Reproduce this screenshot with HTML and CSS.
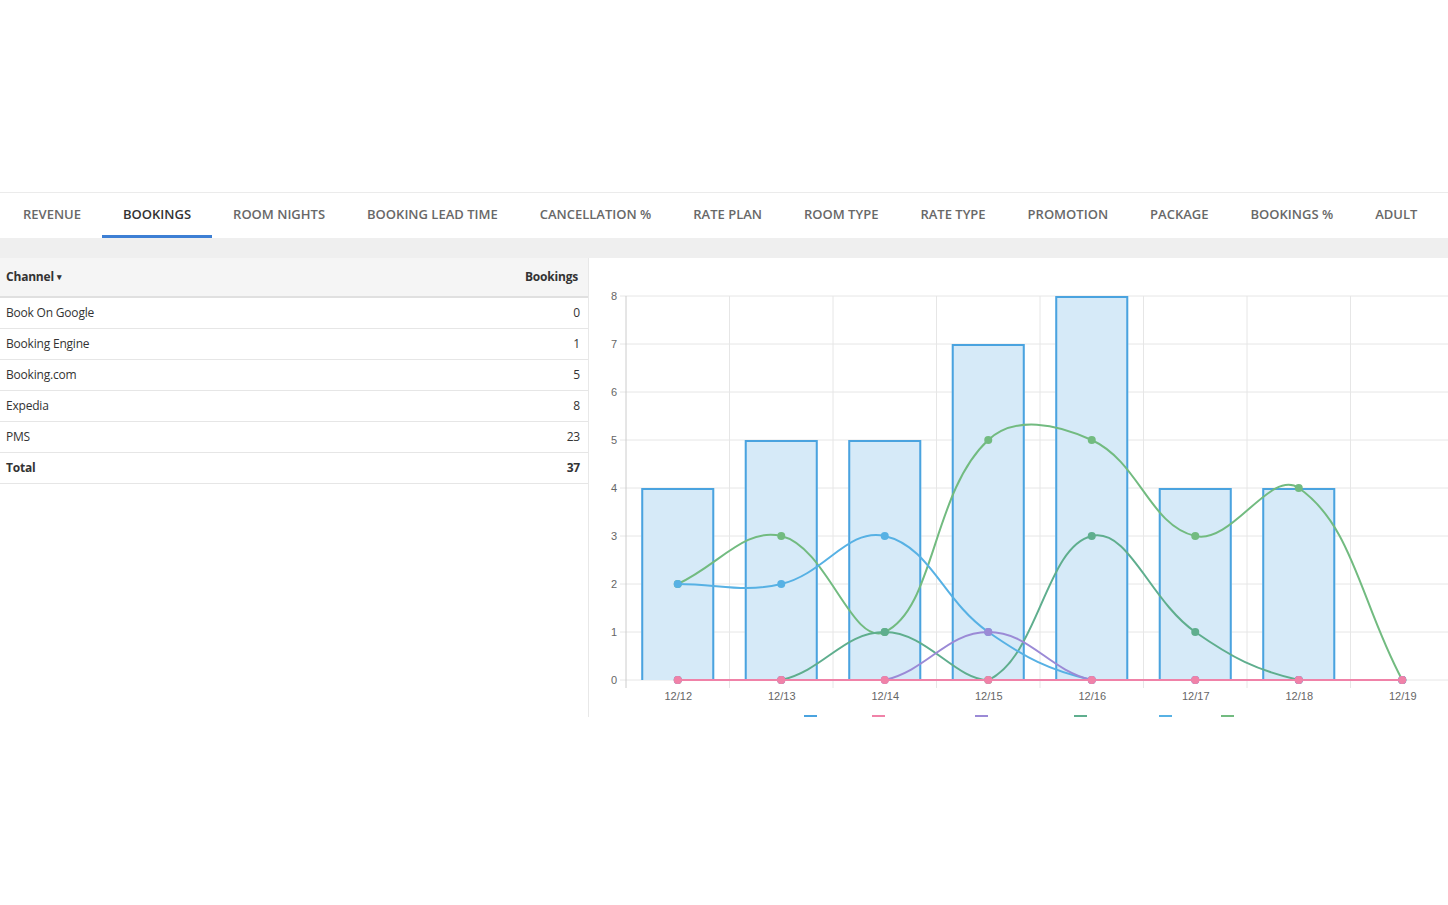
FILE: index.html
```html
<!DOCTYPE html>
<html lang="en">
<head>
<meta charset="utf-8">
<title>Bookings</title>
<link rel="stylesheet" href="styles.css">
</head>
<body>
<div class="top-space"></div>
<nav class="tabs">
  <a class="tab">REVENUE</a>
  <a class="tab active">BOOKINGS</a>
  <a class="tab">ROOM NIGHTS</a>
  <a class="tab">BOOKING LEAD TIME</a>
  <a class="tab">CANCELLATION %</a>
  <a class="tab">RATE PLAN</a>
  <a class="tab">ROOM TYPE</a>
  <a class="tab">RATE TYPE</a>
  <a class="tab">PROMOTION</a>
  <a class="tab">PACKAGE</a>
  <a class="tab">BOOKINGS %</a>
  <a class="tab">ADULT</a>
</nav>
<div class="band"></div>
<div class="content">
  <div class="table-panel">
    <table class="data">
      <thead>
        <tr><th class="left">Channel <span class="caret">&#9662;</span></th><th class="right">Bookings</th></tr>
      </thead>
      <tbody>
        <tr><td>Book On Google</td><td class="right">0</td></tr>
        <tr><td>Booking Engine</td><td class="right">1</td></tr>
        <tr><td>Booking.com</td><td class="right">5</td></tr>
        <tr><td>Expedia</td><td class="right">8</td></tr>
        <tr><td>PMS</td><td class="right">23</td></tr>
        <tr class="total"><td>Total</td><td class="right">37</td></tr>
      </tbody>
    </table>
  </div>
  <div class="chart-panel">
    <svg class="chart" width="859" height="459" viewBox="589 258 859 459" xmlns="http://www.w3.org/2000/svg">
      <g class="grid">
        <line x1="620" y1="296" x2="1454" y2="296"/>
        <line x1="620" y1="344" x2="1454" y2="344"/>
        <line x1="620" y1="392" x2="1454" y2="392"/>
        <line x1="620" y1="440" x2="1454" y2="440"/>
        <line x1="620" y1="488" x2="1454" y2="488"/>
        <line x1="620" y1="536" x2="1454" y2="536"/>
        <line x1="620" y1="584" x2="1454" y2="584"/>
        <line x1="620" y1="632" x2="1454" y2="632"/>
        <line x1="620" y1="680" x2="1454" y2="680"/>
        <line x1="729.5" y1="296" x2="729.5" y2="688"/>
        <line x1="833" y1="296" x2="833" y2="688"/>
        <line x1="936.5" y1="296" x2="936.5" y2="688"/>
        <line x1="1040" y1="296" x2="1040" y2="688"/>
        <line x1="1143.5" y1="296" x2="1143.5" y2="688"/>
        <line x1="1247" y1="296" x2="1247" y2="688"/>
        <line x1="1350.5" y1="296" x2="1350.5" y2="688"/>
      </g>
      <line class="axis" x1="626" y1="296" x2="626" y2="688"/>
      <g class="ylabels">
        <text x="617" y="300">8</text>
        <text x="617" y="348">7</text>
        <text x="617" y="396">6</text>
        <text x="617" y="444">5</text>
        <text x="617" y="492">4</text>
        <text x="617" y="540">3</text>
        <text x="617" y="588">2</text>
        <text x="617" y="636">1</text>
        <text x="617" y="684">0</text>
      </g>
      <g class="xlabels">
        <text x="678.25" y="700">12/12</text>
        <text x="781.75" y="700">12/13</text>
        <text x="885.25" y="700">12/14</text>
        <text x="988.75" y="700">12/15</text>
        <text x="1092.25" y="700">12/16</text>
        <text x="1195.75" y="700">12/17</text>
        <text x="1299.25" y="700">12/18</text>
        <text x="1402.75" y="700">12/19</text>
      </g>
      <g class="bars">
        <rect x="641.25" y="488" width="73" height="192"/>
        <rect x="744.75" y="440" width="73" height="240"/>
        <rect x="848.25" y="440" width="73" height="240"/>
        <rect x="951.75" y="344" width="73" height="336"/>
        <rect x="1055.25" y="296" width="73" height="384"/>
        <rect x="1158.75" y="488" width="73" height="192"/>
        <rect x="1262.25" y="488" width="73" height="192"/>
      </g>
      <g class="bar-borders">
        <path d="M642.25 680 V489 H713.25 V680"/>
        <path d="M745.75 680 V441 H816.75 V680"/>
        <path d="M849.25 680 V441 H920.25 V680"/>
        <path d="M952.75 680 V345 H1023.75 V680"/>
        <path d="M1056.25 680 V297 H1127.25 V680"/>
        <path d="M1159.75 680 V489 H1230.75 V680"/>
        <path d="M1263.25 680 V489 H1334.25 V680"/>
      </g>
      <g id="series"></g>
      <g class="legend">
        <rect x="805" y="716" width="11" height="10" fill="#d6eaf8" stroke="#4aa3df" stroke-width="2"/>
        <rect x="873" y="716" width="11" height="10" fill="#fbe0ea" stroke="#f082a8" stroke-width="2"/>
        <rect x="976" y="716" width="11" height="10" fill="#e8e3f6" stroke="#9b8ad6" stroke-width="2"/>
        <rect x="1075" y="716" width="11" height="10" fill="#dcefe7" stroke="#5fae8e" stroke-width="2"/>
        <rect x="1160" y="716" width="11" height="10" fill="#dcf0fa" stroke="#57b1e4" stroke-width="2"/>
        <rect x="1222" y="716" width="11" height="10" fill="#e0f1e2" stroke="#72bb80" stroke-width="2"/>
      </g>
    </svg>
  </div>
</div>
<div class="bottom-space"></div>
<script src="app.js"></script>
</body>
</html>
```

FILE: styles.css
```css
html, body {
  margin: 0;
  padding: 0;
  background: #ffffff;
  font-family: "Open Sans", "Liberation Sans", Arial, sans-serif;
  color: #333333;
}

.top-space {
  height: 192px;
  border-bottom: 1px solid #ebebeb;
}

.tabs {
  display: flex;
  height: 45px;
  padding-left: 2px;
  background: #ffffff;
}

.tab {
  display: flex;
  align-items: center;
  padding: 0 21px;
  font-size: 13px;
  font-weight: 600;
  color: #686868;
  white-space: nowrap;
  box-sizing: border-box;
  border-bottom: 3px solid transparent;
}

.tab.active {
  color: #333333;
  border-bottom-color: #3d7fd4;
}

.band {
  height: 20px;
  background: #efefef;
}

.content {
  display: flex;
  align-items: stretch;
}

.table-panel {
  width: 588px;
  border-right: 1px solid #e8e8e8;
  flex: none;
}

.data {
  width: 100%;
  border-collapse: collapse;
  font-size: 12px;
  letter-spacing: -0.2px;
}

.data th {
  height: 39px;
  padding: 0 10px 0 6px;
  background: #f5f5f5;
  border-bottom: 2px solid #e0e0e0;
  font-weight: 700;
  color: #333333;
  line-height: 16px;
  box-sizing: border-box;
}

.data th.left { text-align: left; }
.data th.right { text-align: right; }

.caret {
  font-size: 9px;
  position: relative;
  top: -1px;
}

.data td {
  height: 31px;
  padding: 0 8px 0 6px;
  border-bottom: 1px solid #e6e6e6;
  line-height: 16px;
  color: #333333;
  box-sizing: border-box;
}

.data td.right { text-align: right; }

.data .total td {
  font-weight: 700;
}

.chart-panel {
  flex: 1;
  overflow: hidden;
}

.chart {
  display: block;
}

.grid line {
  stroke: #e6e6e6;
  stroke-width: 1;
}

.axis {
  stroke: #cccccc;
  stroke-width: 1;
}

.ylabels text {
  font-family: "Liberation Sans", Arial, sans-serif;
  font-size: 11px;
  fill: #666666;
  text-anchor: end;
}

.xlabels text {
  font-family: "Liberation Sans", Arial, sans-serif;
  font-size: 11px;
  fill: #666666;
  text-anchor: middle;
}

.bars rect {
  fill: #d6eaf8;
}

.bar-borders path {
  fill: none;
  stroke: #4aa3df;
  stroke-width: 2;
}

.series-line {
  fill: none;
  stroke-width: 2;
}

.bottom-space {
  height: 188px;
}
```

FILE: app.js
```js
(function () {
  var NS = 'http://www.w3.org/2000/svg';
  var g = document.getElementById('series');
  var x0 = 677.75, dx = 103.5, y0 = 680, dy = 48;
  var top = 296, bottom = 680, left = 626, right = 1454;
  var t = 0.4;
  var sets = [
    { c: '#72bb80', d: [2, 3, 1, 5, 5, 3, 4, 0] },
    { c: '#5fae8e', d: [0, 0, 1, 0, 3, 1, 0, 0] },
    { c: '#57b1e4', d: [2, 2, 3, 1, 0, 0, 0, 0] },
    { c: '#9b8ad6', d: [0, 0, 0, 1, 0, 0, 0, 0] },
    { c: '#f082a8', d: [0, 0, 0, 0, 0, 0, 0, 0] }
  ];
  function clamp(v, a, b) { return Math.max(a, Math.min(b, v)); }
  sets.forEach(function (s) {
    var pts = s.d.map(function (v, i) { return { x: x0 + i * dx, y: y0 - v * dy }; });
    var cps = pts.map(function (cur, i) {
      var prev = pts[i - 1] || cur;
      var next = pts[i + 1] || cur;
      var d01 = Math.hypot(cur.x - prev.x, cur.y - prev.y);
      var d12 = Math.hypot(next.x - cur.x, next.y - cur.y);
      var s01 = d01 / (d01 + d12), s12 = d12 / (d01 + d12);
      if (isNaN(s01)) s01 = 0;
      if (isNaN(s12)) s12 = 0;
      var fa = t * s01, fb = t * s12;
      return {
        p: { x: clamp(cur.x - fa * (next.x - prev.x), left, right), y: clamp(cur.y - fa * (next.y - prev.y), top, bottom) },
        n: { x: clamp(cur.x + fb * (next.x - prev.x), left, right), y: clamp(cur.y + fb * (next.y - prev.y), top, bottom) }
      };
    });
    var d = 'M' + pts[0].x + ' ' + pts[0].y;
    for (var i = 1; i < pts.length; i++) {
      d += ' C' + cps[i - 1].n.x + ' ' + cps[i - 1].n.y + ' ' + cps[i].p.x + ' ' + cps[i].p.y + ' ' + pts[i].x + ' ' + pts[i].y;
    }
    var path = document.createElementNS(NS, 'path');
    path.setAttribute('d', d);
    path.setAttribute('class', 'series-line');
    path.setAttribute('stroke', s.c);
    g.appendChild(path);
    pts.forEach(function (p) {
      var c = document.createElementNS(NS, 'circle');
      c.setAttribute('cx', p.x);
      c.setAttribute('cy', p.y);
      c.setAttribute('r', 4);
      c.setAttribute('fill', s.c);
      g.appendChild(c);
    });
  });
})();
```
